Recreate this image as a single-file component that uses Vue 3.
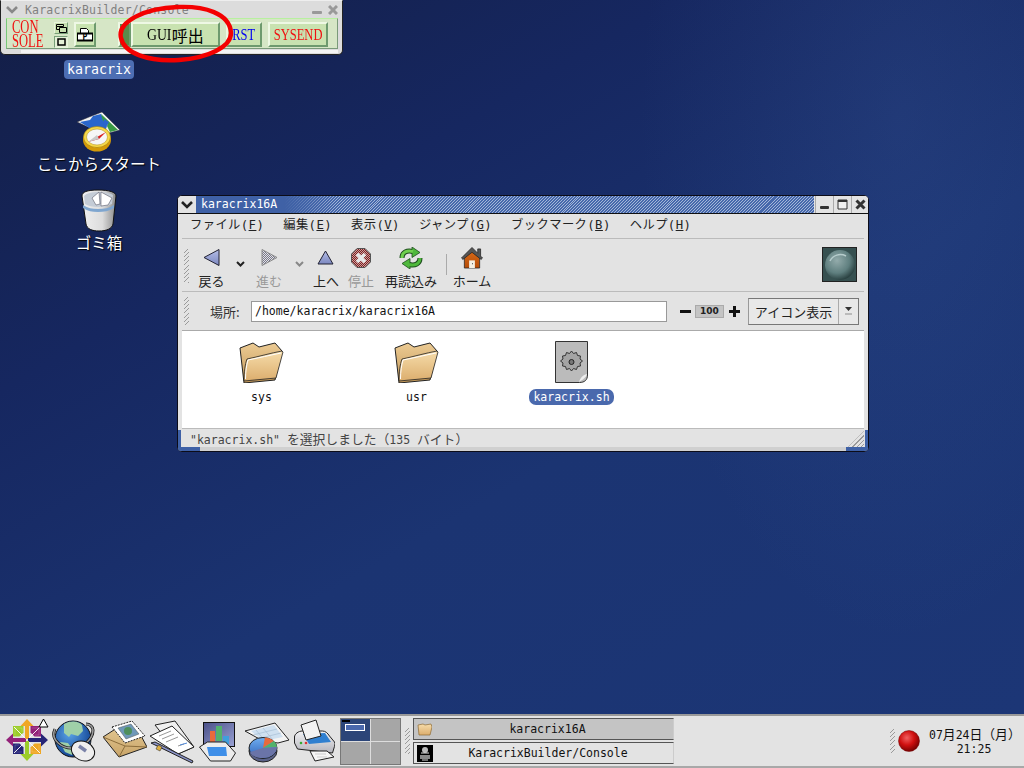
<script setup>
const menus = [
  { label: 'ファイル(', key: 'F' },
  { label: '編集(', key: 'E' },
  { label: '表示(', key: 'V' },
  { label: 'ジャンプ(', key: 'G' },
  { label: 'ブックマーク(', key: 'B' },
  { label: 'ヘルプ(', key: 'H' }
]

// one quarter of the distro logo per rotation: arrow colour, then the square clockwise of it
const logoParts = [
  { angle: 0, arrow: '#efa724', square: '#932279' },
  { angle: 90, arrow: '#262577', square: '#efa724' },
  { angle: 180, arrow: '#9ccd2a', square: '#262577' },
  { angle: 270, arrow: '#932279', square: '#9ccd2a' }
]
</script>

<template>
  <div class="desktop">
    <svg class="defs" width="0" height="0">
      <defs>
        <pattern id="dith" width="2" height="2" patternUnits="userSpaceOnUse">
          <rect width="2" height="2" fill="#e4e4e4" />
          <rect width="1" height="1" fill="#77778c" />
          <rect x="1" y="1" width="1" height="1" fill="#77778c" />
        </pattern>
        <pattern id="dithred" width="2" height="2" patternUnits="userSpaceOnUse">
          <rect width="2" height="2" fill="#cf9c9c" />
          <rect width="1" height="1" fill="#7a2222" />
          <rect x="1" y="1" width="1" height="1" fill="#7a2222" />
        </pattern>
        <linearGradient id="folder" x1="0" y1="0" x2="0" y2="1">
          <stop offset="0" stop-color="#f6dcaa" />
          <stop offset="1" stop-color="#dcae6e" />
        </linearGradient>
        <linearGradient id="folderback" x1="0" y1="0" x2="0" y2="1">
          <stop offset="0" stop-color="#eccb94" />
          <stop offset="1" stop-color="#c49858" />
        </linearGradient>
        <linearGradient id="tri" x1="0" y1="0" x2="0" y2="1">
          <stop offset="0" stop-color="#b4bde6" />
          <stop offset="1" stop-color="#7c88c0" />
        </linearGradient>
        <radialGradient id="ball" cx="0.4" cy="0.35" r="0.7">
          <stop offset="0" stop-color="#f06060" />
          <stop offset="0.5" stop-color="#d01010" />
          <stop offset="1" stop-color="#6c0000" />
        </radialGradient>
        <radialGradient id="orb" cx="0.4" cy="0.35" r="0.7">
          <stop offset="0" stop-color="#93abab" />
          <stop offset="0.6" stop-color="#5f7f7f" />
          <stop offset="1" stop-color="#223838" />
        </radialGradient>
        <linearGradient id="bin" x1="0" y1="0" x2="1" y2="0">
          <stop offset="0" stop-color="#f0f0f0" />
          <stop offset="0.6" stop-color="#dcdcdc" />
          <stop offset="1" stop-color="#8c8c8c" />
        </linearGradient>
        <radialGradient id="globe" cx="0.4" cy="0.35" r="0.7">
          <stop offset="0" stop-color="#5aa4e8" />
          <stop offset="1" stop-color="#0c3c8c" />
        </radialGradient>
        <linearGradient id="wall" x1="0" y1="0" x2="0" y2="1">
          <stop offset="0" stop-color="#d96a18" />
          <stop offset="1" stop-color="#b44c08" />
        </linearGradient>
        <linearGradient id="chartbg" x1="0" y1="0" x2="1" y2="1">
          <stop offset="0" stop-color="#4a5088" />
          <stop offset="1" stop-color="#9aa2d4" />
        </linearGradient>
        <linearGradient id="pie" x1="0" y1="0" x2="0" y2="1">
          <stop offset="0" stop-color="#70aef0" />
          <stop offset="1" stop-color="#2f62b8" />
        </linearGradient>
        <linearGradient id="tan" x1="0" y1="0" x2="0" y2="1">
          <stop offset="0" stop-color="#e2c690" />
          <stop offset="1" stop-color="#c8a468" />
        </linearGradient>
        <linearGradient id="prbody" x1="0" y1="0" x2="0" y2="1">
          <stop offset="0" stop-color="#f2f2f4" />
          <stop offset="1" stop-color="#b4b4bc" />
        </linearGradient>
      </defs>
    </svg>

    <main class="workspace">
      <!-- console window -->
      <section class="console">
        <header class="console-title">
          <svg class="chev" width="12" height="8" viewBox="0 0 12 8"><path d="M1 1l5 5 5-5" fill="none" stroke="#888" stroke-width="2.6" /></svg>
          <span class="console-name">KaracrixBuilder/Console</span>
          <span class="console-btns">
            <svg width="10" height="10" viewBox="0 0 10 10"><rect y="6" width="10" height="3" rx="1" fill="#999" /></svg>
            <svg width="10" height="10" viewBox="0 0 10 10"><path d="M1 1l8 8M9 1l-8 8" stroke="#999" stroke-width="3" /></svg>
          </span>
        </header>
        <div class="console-body">
          <div class="con-label"><span>CON<br />SOLE</span></div>
          <div class="con-toggles">
            <span class="tog"><svg width="11" height="9" viewBox="0 0 11 9"><path d="M.5.5h7v2h-7zM.5 2.500v3h3M3.500 3.500h7v5h-7z" fill="none" stroke="#000" /></svg></span>
            <span class="tog on"><svg width="9" height="8" viewBox="0 0 9 8"><rect x="1" y="1" width="7" height="6" fill="none" stroke="#000" stroke-width="1.500" /></svg></span>
          </div>
          <button class="gbtn print">
            <svg width="16" height="15" viewBox="0 0 16 15">
              <path d="M3.500 6V1.500h6l2 2V6" fill="#fff" stroke="#000" />
              <rect x=".5" y="6" width="15" height="8" fill="#fff" stroke="#000" />
              <path d="M.5 6h15v1.500H.5zM.5 12.500h15v1.500H.5z" fill="#000" />
              <text x="8" y="12.500" text-anchor="middle" class="print-p">P</text>
            </svg>
          </button>
          <span class="gbtn hidden-btn"></span>
          <button class="gbtn gui"><span class="narrow">GUI</span><span class="ja16">呼出</span></button>
          <button class="gbtn rst"><span class="narrow">RST</span></button>
          <button class="gbtn sysend"><span class="narrow">SYSEND</span></button>
        </div>
        <div class="console-foot"></div>
      </section>

      <svg class="scribble" width="122" height="68" viewBox="0 0 122 68">
        <path d="M5 38C1 22 28 8 62 7c26-1 52 6 53 26 0 14-23 25-52 27C32 62 8 53 5 38z" fill="none" stroke="#f40000" stroke-width="4.400" />
      </svg>

      <!-- desktop icons -->
      <div class="dicon home-lbl"><span class="sel">karacrix</span></div>

      <div class="dicon start">
        <svg width="46" height="42" viewBox="0 0 46 42">
          <path d="M1 11l12-5 13-5 18 18-11 3-10-1z" fill="#f2f2f2" stroke="#223" stroke-width=".5" />
          <path d="M4 11l10-2 3-4 8-2 3 6 3 6-2 6-14-3z" fill="#2a66cc" />
          <path d="M25 3l17 16-8 2-3-6 1-3-5-2z" fill="#3a9a44" />
          <path d="M28 8l5 3-2 4-4-2z" fill="#2a66cc" />
          <ellipse cx="21" cy="29" rx="14" ry="11.500" fill="#d49a08" />
          <ellipse cx="21" cy="26" rx="13.500" ry="10.500" fill="#f6d84a" stroke="#a07808" stroke-width=".6" />
          <ellipse cx="21" cy="26" rx="10.500" ry="8" fill="#f6f6f6" stroke="#b89828" stroke-width=".6" />
          <path d="M12 31l18-10-7 7z" fill="#d82020" />
          <path d="M12 31l9-7 2 4z" fill="#c8c8c8" />
        </svg>
        <span class="dlabel">ここからスタート</span>
      </div>

      <div class="dicon trash">
        <svg width="38" height="44" viewBox="0 0 38 44">
          <path d="M2 8c0-4 5-6 16-6s18 2 18 6l-3 28c-1 5-7 7-14 7s-12-2-13-7z" fill="url(#bin)" stroke="#111" stroke-width="1" />
          <path d="M4 8c3-3 8-4 14-4s12 1 15 3l-1 9c-4 2-9 3-14 3s-10-1-13-3z" fill="#c4ccd6" />
          <path d="M16 17l-4-7 7-6 1 12zM21 4l11 6-4 7-7 1z" fill="#fff" stroke="#445" stroke-width=".5" />
          <path d="M3 17c5 3 9 4 15 4s11-1 16-4v3c-5 3-10 4-16 4s-10-1-15-4z" fill="#7fa6cf" />
        </svg>
        <span class="dlabel">ゴミ箱</span>
      </div>

      <!-- file manager window -->
      <section class="nautilus">
        <header class="n-title">
          <span class="n-menu-btn"><svg width="12" height="8" viewBox="0 0 12 8"><path d="M1 1l5 5 5-5" fill="none" stroke="#222" stroke-width="2.600" /></svg></span>
          <div class="n-caption"><span class="n-name">karacrix16A</span><span class="n-stripes"></span></div>
          <span class="n-btn"><svg width="11" height="11" viewBox="0 0 11 11"><rect x="1" y="7" width="9" height="3" rx="1" fill="#333" /></svg></span>
          <span class="n-btn"><svg width="11" height="11" viewBox="0 0 11 11"><path d="M1 1h9v9H1z" fill="#f0f0f0" stroke="#333" /><path d="M1 2h9" stroke="#333" stroke-width="2" /></svg></span>
          <span class="n-btn"><svg width="11" height="11" viewBox="0 0 11 11"><path d="M1.500 1.500l8 8M9.500 1.500l-8 8" stroke="#333" stroke-width="3" /></svg></span>
        </header>

        <div class="n-inner">
          <nav class="n-menubar">
            <span v-for="m in menus" :key="m.key" class="n-menu">{{ m.label }}<u>{{ m.key }}</u>)</span>
          </nav>

          <div class="n-toolbar">
            <span class="grip"></span>
            <div class="tool w44">
              <svg width="20" height="20" viewBox="0 0 20 20"><path d="M17 1.500v16L2 9.500z" fill="url(#tri)" stroke="#223" /></svg>
              <span>戻る</span>
            </div>
            <div class="tool-arrow w12"><svg width="9" height="6" viewBox="0 0 9 6"><path d="M1 1l3.500 3.500L8 1" fill="none" stroke="#222" stroke-width="2" /></svg></div>
            <div class="tool w46 off">
              <svg width="20" height="20" viewBox="0 0 20 20"><path d="M3 1.500v16l15-8z" fill="url(#dith)" stroke="#8a8a8a" /></svg>
              <span>進む</span>
            </div>
            <div class="tool-arrow w14"><svg width="9" height="6" viewBox="0 0 9 6"><path d="M1 1l3.500 3.500L8 1" fill="none" stroke="#888" stroke-width="2" /></svg></div>
            <div class="tool w40">
              <svg width="20" height="20" viewBox="0 0 20 20"><path d="M2 16h15L9.500 3z" fill="url(#tri)" stroke="#223" /></svg>
              <span>上へ</span>
            </div>
            <div class="tool w30 off">
              <svg width="20" height="20" viewBox="0 0 20 20"><path d="M6 .5h8L19.500 6v8L14 19.500H6L.5 14V6z" fill="url(#dithred)" stroke="#555" /><path d="M6 6l8 8M14 6l-8 8" stroke="#e8e8e8" stroke-width="3.600" /></svg>
              <span>停止</span>
            </div>
            <div class="tool w70">
              <svg width="24" height="22" viewBox="0 0 24 22">
                <g>
                  <path d="M3 11C3 5 8 3 14 4.500" fill="none" stroke="#1d4d1d" stroke-width="5" />
                  <path d="M13 0l8 5.500-8 5z" fill="#4fb83c" stroke="#1d4d1d" stroke-width=".8" />
                  <path d="M3 11C3 5 8 3 14 4.500" fill="none" stroke="#6fd04e" stroke-width="3" />
                </g>
                <g transform="rotate(180 12 11)">
                  <path d="M3 11C3 5 8 3 14 4.500" fill="none" stroke="#1d4d1d" stroke-width="5" />
                  <path d="M13 0l8 5.500-8 5z" fill="#4fb83c" stroke="#1d4d1d" stroke-width=".8" />
                  <path d="M3 11C3 5 8 3 14 4.500" fill="none" stroke="#4fb83c" stroke-width="3" />
                </g>
              </svg>
              <span>再読込み</span>
            </div>
            <span class="tool-sep"></span>
            <div class="tool w52">
              <svg width="24" height="23" viewBox="0 0 24 23">
                <path d="M4 9.500L12 4l8 5.500V22H4z" fill="url(#wall)" stroke="#222" stroke-width=".8" />
                <path d="M1 11.500L12 .5l6 6V2h3v7.500l2 2-1.500 1.500L12 5.500 2.500 13z" fill="#555" stroke="#222" stroke-width=".8" />
                <rect x="9" y="14" width="6" height="8" fill="#f4f0e4" />
                <rect x="12" y="17" width="1" height="1" fill="#333" />
              </svg>
              <span>ホーム</span>
            </div>
            <span class="tool-fill"></span>
            <div class="throbber"><svg width="32" height="32" viewBox="0 0 32 32"><circle cx="16" cy="16" r="15" fill="url(#orb)" /><path d="M6 12c3-6 10-8 16-5" fill="none" stroke="#b6cccc" stroke-width="1.500" /></svg></div>
          </div>

          <div class="n-locbar">
            <span class="grip tall"></span>
            <span class="loc-label">場所:</span>
            <input class="loc-entry" value="/home/karacrix/karacrix16A" readonly />
            <svg class="zoom-ic" width="11" height="11" viewBox="0 0 11 11"><rect y="4" width="11" height="3" fill="#111" /></svg>
            <span class="zoom-val">100</span>
            <svg class="zoom-ic" width="11" height="11" viewBox="0 0 11 11"><path d="M0 4h4V0h3v4h4v3H7v4H4V7H0z" fill="#111" /></svg>
            <div class="view-sel">
              <span class="view-txt">アイコン表示</span>
              <span class="view-arr"><svg width="9" height="10" viewBox="0 0 9 10"><path d="M1 1h7L4.500 5z" fill="#333" /><rect x="1" y="7" width="7" height="2" fill="#bbb" /></svg></span>
            </div>
          </div>

          <div class="n-view">
            <div class="file">
              <svg width="46" height="42" viewBox="0 0 46 42">
                <path d="M1 7l13-5 6 4 16-4 7 8-7 29-31 3z" fill="url(#folderback)" stroke="#222" />
                <path d="M5 40c0-8 1-17 3-22 10-2 24-6 35-8l1 1-7 26z" fill="url(#folder)" stroke="#222" stroke-width=".8" />
                <path d="M6.500 38c0-7 1-14 2.500-19 10-2 23-5 33-7" fill="none" stroke="#fff" />
              </svg>
              <span class="fname">sys</span>
            </div>
            <div class="file">
              <svg width="46" height="42" viewBox="0 0 46 42">
                <path d="M1 7l13-5 6 4 16-4 7 8-7 29-31 3z" fill="url(#folderback)" stroke="#222" />
                <path d="M5 40c0-8 1-17 3-22 10-2 24-6 35-8l1 1-7 26z" fill="url(#folder)" stroke="#222" stroke-width=".8" />
                <path d="M6.500 38c0-7 1-14 2.500-19 10-2 23-5 33-7" fill="none" stroke="#fff" />
              </svg>
              <span class="fname">usr</span>
            </div>
            <div class="file">
              <svg width="33" height="42" viewBox="0 0 33 42">
                <path d="M.5.5h32V34c0 5-3 7.500-8 7.500H.5z" fill="#bbb" stroke="#333" />
                <path d="M32 33c-1 4-5 6-8 8 1-3 3-7 8-8z" fill="#eee" />
                <path d="M16.500 10l2 2.500 3-1 1 3 3 .5-.5 3 2.500 2-2.500 2 .5 3-3 .5-1 3-3-1-2 2.500-2-2.500-3 1-1-3-3-.5.500-3-2.500-2 2.500-2-.5-3 3-.5 1-3 3 1z" fill="#a4a4a4" stroke="#333" />
                <circle cx="16.500" cy="21" r="2.500" fill="#777" stroke="#222" />
              </svg>
              <span class="fname selected">karacrix.sh</span>
            </div>
          </div>

          <footer class="n-status">
            <span>"karacrix.sh" <span class="ja13">を選択しました（</span>135 <span class="ja13">バイト）</span></span>
            <span class="resize"></span>
          </footer>
        </div>
        <div class="n-edge"><span class="n-edge-l"></span><span class="n-edge-r"></span></div>
      </section>
    </main>

    <!-- bottom panel -->
    <footer class="panel">
      <div class="launchers">
        <svg class="l-logo" width="44" height="46" viewBox="0 0 44 46">
          <g v-for="p in logoParts" :key="p.angle" :transform="`rotate(${p.angle} 22 22)`">
            <path d="M22 1l6.500 7H24v13h-4V8h-4.500z" :fill="p.arrow" />
            <path d="M25.500 8H36v10.500H29.500l-4-4z" :fill="p.square" />
            <path d="M23.500 20.500L35 9" stroke="#fff" stroke-width=".9" />
            <path d="M27 10h7v7h-4" fill="none" stroke="#fff" stroke-opacity=".25" stroke-width=".7" />
          </g>
          <path d="M38.500 1l4.500 8h-9z" fill="#fff" stroke="#000" />
        </svg>

        <svg class="l-globe" width="44" height="46" viewBox="0 0 44 46">
          <circle cx="21" cy="21" r="18" fill="url(#globe)" stroke="#111" />
          <path d="M12 6c7-4 15-3 18 1l1 6-5 5-7-2-2 3-5-4zM8 24l8 1 5 7-1 5-7-3z" fill="#9fd0a8" />
          <path d="M3 11C-2 22 10 31 22 30c10-1 19-9 19-18 0-3-3-6-7-6" fill="none" stroke="#111" stroke-width="3" />
          <path d="M3 11C-2 22 10 31 22 30c10-1 19-9 19-18 0-3-3-6-7-6" fill="none" stroke="#9a9a9a" stroke-width="1.600" />
          <ellipse cx="31" cy="33" rx="12" ry="9.500" transform="rotate(25 31 33)" fill="#eee" stroke="#111" />
          <path d="M27 28l7 5" stroke="#7a82a8" stroke-width="3.500" />
        </svg>

        <svg class="l-mail" width="44" height="46" viewBox="0 0 44 46">
          <path d="M0 19l14-9 22 4 8 15-28 10z" fill="url(#tan)" stroke="#222" />
          <path d="M0 19l22 9 22 1M22 28l-6 11" fill="none" stroke="#8c6e3c" />
          <path d="M9 9l20-6 13 15-20 7z" fill="#fff" stroke="#222" stroke-dasharray="2 1" />
          <path d="M15 10l13-4 8 10-13 5z" fill="#6f98b8" stroke="#555" stroke-width=".5" />
          <circle cx="25" cy="13" r="4" fill="#4f8f5c" />
        </svg>

        <svg class="l-docs" width="45" height="46" viewBox="0 0 45 46">
          <path d="M5 7l20-4 19 26-16 7z" fill="#f0f0f0" stroke="#222" />
          <path d="M0 18l22-10 22 21-16 7z" fill="#fff" stroke="#222" />
          <path d="M9 18l12-5M12 21l12-5M16 24l12-5M28 28l6-2" stroke="#999" />
          <path d="M30 27l7-2" stroke="#4f88d8" />
          <path d="M1 25l4-1 38 19-1 2z" fill="#8a93c8" stroke="#222" />
          <path d="M8 27l4 2-2 4-4-2z" fill="#e0b040" stroke="#222" stroke-width=".5" />
        </svg>

        <svg class="l-chart" width="37" height="46" viewBox="0 0 37 46">
          <rect x="4.500" y="4.500" width="31" height="24" fill="url(#chartbg)" stroke="#111" />
          <rect x="11" y="13" width="5" height="11" fill="#e86a3c" />
          <rect x="17" y="8" width="6" height="15" fill="#52b26c" />
          <rect x="24" y="18" width="6" height="8" fill="#3f9fdc" />
          <path d="M.5 29l8-5h18l10 11-5 8h-20z" fill="#ececec" stroke="#222" />
          <path d="M8 29h19l1 9H10z" fill="#3f8fe8" />
        </svg>

        <svg class="l-sheet" width="45" height="46" viewBox="0 0 45 46">
          <path d="M0 13l30-8 14 17-11 3-15-2z" fill="#f4f4f4" stroke="#222" />
          <path d="M6 13l23-6 9 12-20 4z" fill="#cfe0f0" />
          <path d="M11 12l10 12M18 10l10 12M8 17l24-6M12 21l24-6" stroke="#9fb8d0" stroke-width=".6" />
          <ellipse cx="18" cy="33" rx="14" ry="11" fill="#5a6288" stroke="#222" />
          <ellipse cx="18" cy="30" rx="14" ry="10.500" fill="url(#pie)" stroke="#222" />
          <path d="M18 30l2-10.500a14 10.500 0 0 1 9 3.500z" fill="#e86a3c" />
          <path d="M18 30l11-7a14 10.500 0 0 1 3 6z" fill="#52b26c" />
          <path d="M18 30l14-1c0 6-6 11-14 11s-12-3-13-6z" fill="#6a74a8" />
        </svg>

        <svg class="l-printer" width="41" height="46" viewBox="0 0 41 46">
          <path d="M.5 19c0-3 4-6 8-6h20c3 0 5 2 7 5l5 6c1 2 0 4-.5 6l-1.500 5-35-4-3-6z" fill="url(#prbody)" stroke="#222" />
          <path d="M9 16l22-1 6 9-22 2z" fill="#2f7fd0" />
          <path d="M7 7l15-5 5 16-15 4z" fill="#f2f2f2" stroke="#222" />
          <path d="M16 33h17l7 6-19 4z" fill="#f6f6f6" stroke="#222" />
          <path d="M21 36h11M23 39h10" stroke="#bbb" stroke-width=".7" />
          <circle cx="7" cy="25" r="1.300" fill="#3a3" />
          <circle cx="12" cy="25" r="1.300" fill="#d33" />
        </svg>
      </div>

      <div class="pager">
        <div class="pcell active"><span class="pmini"></span><span class="pwin"></span></div>
        <div class="pcell"></div>
        <div class="pcell"></div>
        <div class="pcell"></div>
      </div>

      <span class="grip panel-grip"></span>

      <div class="tasks">
        <div class="task current">
          <svg width="15" height="13" viewBox="0 0 15 13"><path d="M1 2l5-1 2 1 6-1 1 3-2 8H2z" fill="url(#folder)" stroke="#8c6a35" stroke-width=".7" /></svg>
          <span>karacrix16A</span>
        </div>
        <div class="task">
          <svg width="16" height="17" viewBox="0 0 16 17"><rect width="16" height="17" fill="#000" /><circle cx="8" cy="5" r="3" fill="#bbb" /><path d="M3 10h10v4H3z" fill="#888" /><path d="M4 8h8M5 15h6" stroke="#ddd" /></svg>
          <span>KaracrixBuilder/Console</span>
        </div>
      </div>

      <span class="panel-fill"></span>
      <span class="grip tray-grip"></span>
      <svg class="rec" width="22" height="22" viewBox="0 0 22 22"><circle cx="11" cy="11" r="10.500" fill="url(#ball)" stroke="#700" stroke-width=".5" /></svg>
      <div class="clock">07<span class="ja13">月</span>24<span class="ja13">日（月）</span><br />21:25</div>
    </footer>
  </div>
</template>

<style>
html,
body {
  margin: 0;
  padding: 0;
  background: #14204a;
}
</style>

<style scoped>
.desktop {
  width: 1024px;
  height: 768px;
  display: flex;
  flex-direction: column;
  overflow: hidden;
  font-family: "DejaVu Sans Mono", "Noto Sans CJK JP", monospace;
  font-size: 11.500px;
  color: #111;
}

.defs {
  position: absolute;
}

.ja13 {
  font-family: "Noto Sans CJK JP", sans-serif;
  font-size: 12.800px;
}

.workspace {
  position: relative;
  flex: 1;
  background:
    radial-gradient(ellipse 260px 520px at 900px 120px, rgba(70, 105, 175, 0.18) 0%, rgba(70, 105, 175, 0) 100%),
    linear-gradient(150deg, #131e46 0%, #162760 30%, #1b3472 60%, #1c3676 100%);
}

/* console window */
.console {
  position: absolute;
  left: 0;
  top: 0;
  width: 343px;
  height: 55px;
  box-sizing: border-box;
  background: #dcdcdc;
  border: 1px solid #222;
  border-top: 1px solid #eee;
  border-radius: 0 0 5px 5px;
  display: flex;
  flex-direction: column;
}

.console-title {
  display: flex;
  align-items: center;
  height: 17px;
  padding-left: 5px;
  background: #dcdcdc;
  color: #808080;
}

.console-name {
  margin-left: 7px;
  letter-spacing: 0.200px;
}

.console-btns {
  margin-left: auto;
  margin-right: 4px;
  display: flex;
  gap: 6px;
}

.console-body {
  display: flex;
  align-items: flex-start;
  height: 31px;
  margin: 0 4px 0 5px;
  box-sizing: border-box;
  background: #d6e6c6;
  border: 1px solid;
  border-color: #b8f0a0 #7a9a7a #7a9a7a #78c878;
  padding: 3px 0 0 5px;
}

.con-label {
  flex: none;
  width: 42px;
  height: 27px;
  margin-top: -2px;
  font-family: "Liberation Serif", serif;
  font-size: 19px;
  line-height: 14px;
  color: #f01010;
}

.con-label span {
  display: block;
  transform: scaleX(0.66);
  transform-origin: left center;
}

.con-toggles {
  display: flex;
  flex-direction: column;
  gap: 2px;
  margin-right: 6px;
}

.tog {
  width: 14px;
  height: 12px;
  display: flex;
  align-items: center;
  justify-content: center;
  background: #c8e0b0;
  border: 1px solid #e8f4dc;
  border-right-color: #78a078;
  border-bottom-color: #78a078;
  box-sizing: border-box;
}

.tog.on {
  background: #e4f0d6;
  border-color: #78a078 #e8f4dc #e8f4dc #78a078;
}

.gbtn {
  display: flex;
  align-items: center;
  justify-content: center;
  padding: 0;
  height: 25px;
  box-sizing: border-box;
  background: #c8e2b0;
  border: 2px solid;
  border-color: #eef8e4 #6e9a6e #6e9a6e #eef8e4;
  font-family: "Liberation Serif", serif;
  font-size: 16px;
  color: #000;
}

.print {
  width: 22px;
}

.print-p {
  font: bold 8px "DejaVu Sans Mono", monospace;
}

.narrow {
  display: inline-block;
  transform: scaleX(0.78);
}

.gui .narrow {
  transform: scaleX(0.86);
  margin: 0 -2px;
}

.ja16 {
  font-family: "Noto Sans CJK JP", sans-serif;
  font-size: 16px;
}

.hidden-btn {
  width: 13px;
  margin-left: 22px;
  background: #5a8a4a;
}

.gui {
  width: 89px;
}

.rst {
  width: 36px;
  margin-left: 6px;
  color: #0000f0;
}

.sysend {
  width: 60px;
  margin-left: 6px;
  color: #f01010;
}

.console-foot {
  flex: 1;
  margin: 1px 4px 0 20px;
  background: linear-gradient(#f4f4f4 0 3px, #dcdcdc 3px);
}

.scribble {
  position: absolute;
  left: 116px;
  top: 0;
}

/* desktop icons */
.dicon {
  position: absolute;
  display: flex;
  flex-direction: column;
  align-items: center;
  width: 140px;
  color: #fff;
}

.home-lbl {
  left: 29px;
  top: 60px;
}

.sel {
  background: #4d6eb3;
  border-radius: 4px;
  padding: 1px 3px;
  line-height: 17px;
  font-size: 13.300px;
  color: #fff;
}

.start {
  left: 29px;
  top: 111px;
}

.trash {
  left: 29px;
  top: 188px;
}

.trash svg,
.start svg {
  display: block;
}

.dlabel {
  font-family: "Noto Sans CJK JP", sans-serif;
  font-size: 15.500px;
  line-height: 20px;
  text-shadow: 1px 1px 1px #000;
}

/* file manager */
.nautilus {
  position: absolute;
  left: 177px;
  top: 195px;
  width: 692px;
  height: 257px;
  box-sizing: border-box;
  border: 1px solid #0c0c18;
  border-radius: 5px;
  background: #e3e3e3;
  display: flex;
  flex-direction: column;
  overflow: hidden;
}

.n-title {
  display: flex;
  align-items: stretch;
  height: 17px;
  background: #e3e3e3;
  border-bottom: 1px solid #111;
}

.n-menu-btn {
  width: 18px;
  display: flex;
  align-items: center;
  justify-content: center;
}

.n-caption {
  flex: 1;
  display: flex;
  background: #3f61a6;
  min-width: 0;
}

.n-name {
  padding: 0 7px 0 5px;
  color: #fff;
  line-height: 17px;
}

.n-stripes {
  flex: 1;
  background: repeating-linear-gradient(135deg, #4668ac 0 1.400px, #a4b6d8 1.400px 2.100px);
  mask-image: linear-gradient(90deg, transparent, #000 10%);
}

.n-btn {
  width: 17px;
  display: flex;
  align-items: center;
  justify-content: center;
  background: #e3e3e3;
  border-left: 1px solid #aaa;
  box-sizing: border-box;
  margin-left: 1px;
}

.n-inner {
  flex: 1;
  display: flex;
  flex-direction: column;
  border-left: 4px solid #e3e3e3;
  border-right: 4px solid #e3e3e3;
  min-height: 0;
}

.n-menubar {
  display: flex;
  align-items: center;
  height: 24px;
  box-sizing: content-box;
  padding: 0 0 0 8px;
  gap: 19px;
  border-bottom: 1px solid #bbb;
  font-family: "DejaVu Sans Mono", "Noto Sans CJK JP", monospace;
  font-size: 12.300px;
  letter-spacing: 0.400px;
  line-height: 20px;
  color: #222;
}

.n-menu {
  margin-top: -2px;
}

.n-toolbar {
  display: flex;
  align-items: flex-start;
  height: 53px;
  box-sizing: border-box;
  border-bottom: 1px solid #bbb;
  padding-left: 2px;
  font-family: "Noto Sans CJK JP", sans-serif;
  font-size: 13px;
  color: #222;
}

.grip {
  flex: none;
  width: 5px;
  height: 34px;
  margin-top: 10px;
  background: repeating-linear-gradient(135deg, #e3e3e3 0 2.300px, #9a9a9a 2.300px 3px);
}

.grip.tall {
  height: 28px;
  margin-top: 0;
}

.tool {
  flex: none;
  display: flex;
  flex-direction: column;
  align-items: center;
  padding-top: 8px;
  line-height: 17px;
  white-space: nowrap;
}

.tool svg {
  height: 22px;
  margin-bottom: 3px;
}

.tool.off {
  color: #999;
}

.w44 { width: 45px; }
.w46 { width: 46px; }
.w40 { width: 40px; }
.w30 { width: 30px; }
.w70 { width: 70px; }
.w52 { width: 52px; }
.w12 { width: 12px; }
.w14 { width: 14px; }

.tool-arrow {
  flex: none;
  display: flex;
  justify-content: center;
  padding-top: 22px;
}

.tool-sep {
  flex: none;
  width: 1px;
  height: 21px;
  margin: 15px -1px 0 0;
  background: #aaa;
}

.tool-fill {
  flex: 1;
}

.throbber {
  width: 35px;
  height: 35px;
  margin: 8px 7px 0 0;
  box-sizing: border-box;
  border: 1px solid #222;
  background: #365050;
  display: flex;
  align-items: center;
  justify-content: center;
}

.n-locbar {
  display: flex;
  align-items: center;
  height: 39px;
  box-sizing: border-box;
  padding-left: 2px;
  border-bottom: 1px solid #aaa;
}

.loc-label {
  margin-left: 21px;
  width: 41px;
  font-family: "Noto Sans CJK JP", sans-serif;
  font-size: 13px;
  color: #333;
}

.loc-entry {
  width: 416px;
  height: 21px;
  box-sizing: border-box;
  border: 1px solid #999;
  padding: 0 3px;
  background: #fff;
  font: 11.500px "DejaVu Sans Mono", monospace;
  color: #111;
  outline: none;
}

.zoom-ic {
  flex: none;
  margin-left: 13px;
}

.zoom-val {
  margin-left: 4px;
  width: 29px;
  height: 13px;
  box-sizing: border-box;
  background: #c4c4c4;
  border: 1px solid #aaa;
  font: bold 9px/11px "DejaVu Sans", sans-serif;
  text-align: center;
  color: #222;
}

.zoom-val + .zoom-ic {
  margin-left: 5px;
}

.view-sel {
  margin-left: 8px;
  width: 111px;
  height: 27px;
  box-sizing: border-box;
  display: flex;
  align-items: center;
  border: 1px solid #777;
  border-left-color: #999;
  background: #e8e8e8;
  font-family: "Noto Sans CJK JP", sans-serif;
  font-size: 13px;
}

.view-txt {
  flex: 1;
  text-align: center;
  color: #222;
}

.view-arr {
  width: 19px;
  height: 100%;
  display: flex;
  align-items: center;
  justify-content: center;
  border-left: 1px solid #aaa;
}

.n-view {
  flex: 1;
  display: flex;
  background: #fff;
  padding: 10px 0 0 2px;
  min-height: 0;
}

.file {
  width: 155px;
  display: flex;
  flex-direction: column;
  align-items: center;
}

.file svg {
  height: 42px;
}

.fname {
  margin-top: 6px;
  padding: 0 4px;
  line-height: 16px;
  font-size: 11.500px;
}

.selected {
  background: #4a69ad;
  color: #fff;
  border-radius: 7px;
}

.n-status {
  position: relative;
  flex: none;
  height: 19px;
  border-top: 1px solid #bbb;
  box-sizing: border-box;
  display: flex;
  align-items: center;
  padding-left: 8px;
  color: #444;
  white-space: nowrap;
}

.resize {
  position: absolute;
  right: 0;
  bottom: 0;
  width: 16px;
  height: 16px;
  background: repeating-linear-gradient(135deg, transparent 0 2px, #9a9a9a 2px 3px);
  clip-path: polygon(100% 0, 100% 100%, 0 100%);
}

.n-edge {
  flex: none;
  height: 4px;
  background: #d0d0d0;
  display: flex;
  justify-content: space-between;
}

.n-edge-l,
.n-edge-r {
  width: 22px;
  background: #3f61a6;
}

/* blue corner pieces running up the window sides beside the status bar */
.nautilus::before,
.nautilus::after {
  content: "";
  position: absolute;
  bottom: 0;
  width: 3px;
  height: 21px;
  background: #3f61a6;
}

.nautilus::before {
  left: 0;
}

.nautilus::after {
  right: 0;
}

/* panel */
.panel {
  flex: none;
  height: 54px;
  box-sizing: border-box;
  background: #e3e3e3;
  border-top: 2px solid #999;
  border-bottom: 2px solid #a8a8a8;
  display: flex;
  align-items: center;
  padding-left: 5px;
}

.launchers {
  display: flex;
  width: 335px;
  align-items: center;
  flex: none;
}

.l-globe { margin-left: 3px; }
.l-mail { margin-left: 7px; }
.l-docs { margin-left: 3px; }
.l-chart { margin-left: 4px; }
.l-sheet { margin-left: 9px; }
.l-printer { margin-left: 4px; }

.pager {
  flex: none;
  display: grid;
  grid-template-columns: 1fr 1fr;
  grid-template-rows: 1fr 1fr;
  gap: 1px;
  width: 61px;
  height: 47px;
  box-sizing: border-box;
  border: 1px solid #777;
  background: #ddd;
}

.pcell {
  position: relative;
  background: #a6a6a6;
}

.pcell.active {
  background: #2c4578;
}

.pmini {
  position: absolute;
  left: 1px;
  top: 1px;
  width: 8px;
  height: 2px;
  background: #fff;
  border: 1px solid #000;
  box-sizing: border-box;
}

.pwin {
  position: absolute;
  left: 4px;
  top: 5px;
  width: 18px;
  height: 5px;
  border: 1px solid #fff;
  background: #4a69ad;
}

.panel-grip {
  height: 26px;
  margin: 0 3px 0 4px;
}

.tasks {
  flex: none;
  width: 261px;
  display: flex;
  flex-direction: column;
  gap: 2px;
}

.task {
  display: flex;
  align-items: center;
  height: 22px;
  box-sizing: border-box;
  border: 1px solid #555;
  border-right-color: #ccc;
  background: #e3e3e3;
  padding-left: 3px;
}

.task span {
  flex: 1;
  text-align: center;
  padding-right: 10px;
}

.task.current {
  background: #c4c4c4;
}

.panel-fill {
  flex: 1;
}

.tray-grip {
  width: 5px;
  height: 24px;
  margin: 0 3px 0 0;
}

.rec {
  flex: none;
  margin-right: 9px;
}

.clock {
  flex: none;
  width: 90px;
  margin-right: 5px;
  text-align: center;
  line-height: 14px;
  white-space: nowrap;
}
</style>
